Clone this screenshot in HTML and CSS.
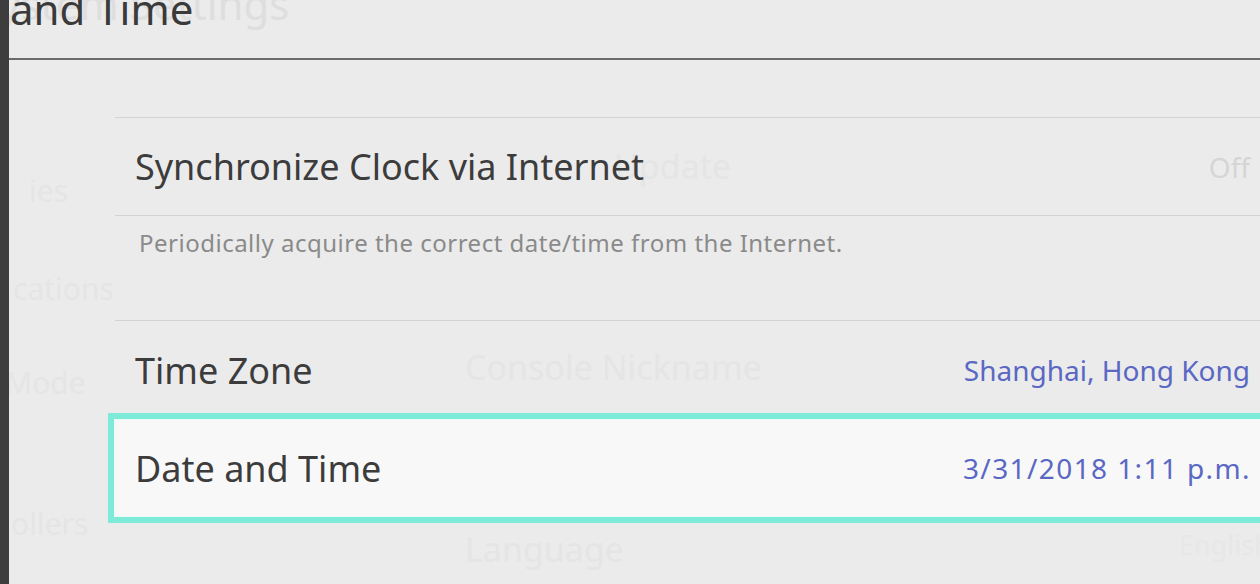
FILE: index.html
```html
<!DOCTYPE html>
<html lang="en">
<head>
    <meta charset="UTF-8">
    <meta name="viewport" content="width=device-width, initial-scale=1.0">
    <link rel="stylesheet" href="styles.css">
</head>
<body>

<div class="screen">
    <!-- Left edge of the sidebar that is sliding out -->
    <div class="strip"></div>

    <div class="main">
        <header class="title-bar">
            <h1 class="title">and Time</h1>
        </header>

        <ul class="list">
            <li class="row row-sync">
                <span class="label">Synchronize Clock via Internet</span>
                <span class="value value-off">Off</span>
            </li>
            <li class="desc">Periodically acquire the correct date/time from the Internet.</li>
            <li class="row row-zone">
                <span class="label">Time Zone</span>
                <span class="value">Shanghai, Hong Kong</span>
            </li>
            <li class="row row-selected">
                <span class="label">Date and Time</span>
                <span class="value value-date">3/31/2018 1:11 p.m.</span>
            </li>
        </ul>

        <!-- Faded text of the previous screen (cross-fade) -->
        <div class="ghosts">
            <span class="ghost ghost-title">System Settings</span>
            <span class="ghost ghost-side g-side-1">ies</span>
            <span class="ghost ghost-side g-side-2">cations</span>
            <span class="ghost ghost-side g-side-3">Mode</span>
            <span class="ghost ghost-side g-side-4">ollers</span>
            <span class="ghost ghost-item g-update">Update</span>
            <span class="ghost ghost-item g-nick">Console Nickname</span>
            <span class="ghost ghost-item g-lang">Language</span>
            <span class="ghost ghost-item g-lang-val">English</span>
        </div>
    </div>
</div>

</body>
</html>
```

FILE: styles.css
```css
body {
  margin: 0;
  padding: 0;
  width: 1260px;
  height: 584px;
  overflow: hidden;
  background-color: #ebebeb;
  font-family: "Noto Sans", "Open Sans", sans-serif;
  color: #3c3c3c;
}
.screen {
  display: flex;
  height: 584px;
}
.strip {
  width: 9px;
  flex: none;
  background-color: #3d3d3d;
}
.main {
  position: relative;
  flex: 1;
  overflow: hidden;
  background-color: #ebebeb;
}
.title-bar {
  height: 58px;
  border-bottom: 2px solid #6b6b6b;
  overflow: hidden;
}
.title {
  margin: -12px 0 0 1px;
  font-size: 42px;
  font-weight: normal;
  line-height: 42px;
  color: #3a3a3a;
  white-space: nowrap;
  position: relative;
  z-index: 1;
}
.list {
  list-style: none;
  margin: 57px -8px 0 106px;
  padding: 0;
  border-top: 1px solid #d3d3d3;
}
.row {
  display: flex;
  align-items: center;
  justify-content: space-between;
  padding: 0 18px 0 20px;
  white-space: nowrap;
}
.label {
  font-size: 36px;
  color: #3c3c3c;
}
.value {
  font-size: 28px;
  color: #5a68c4;
}
.value-date {
  letter-spacing: 1.4px;
  margin-right: -1px;
}
.value-off {
  color: #d5d5d5;
}
.row-sync {
  height: 97px;
  border-bottom: 1px solid #d3d3d3;
  position: relative;
  z-index: 1;
}
.desc {
  height: 93px;
  padding: 11px 0 0 24px;
  font-size: 24px;
  letter-spacing: 0.5px;
  line-height: 32px;
  color: #8a8a8a;
  border-bottom: 1px solid #d3d3d3;
  white-space: nowrap;
  position: relative;
  z-index: 1;
}
.row-zone {
  height: 86px;
  padding-top: 6px;
  position: relative;
  z-index: 1;
}
.row-selected {
  height: 98px;
  margin: 0 -7px;
  padding: 0 19px 0 21px;
  border: 6px solid #7eebd9;
  background-color: #f8f8f8;
  box-shadow: inset 0 0 0 1px #e9fbf8;
  position: relative;
  z-index: 2;
}

/* previous screen fading out */
.ghosts {
  position: absolute;
  top: 0;
  left: 0;
  right: 0;
  bottom: 0;
  pointer-events: none;
}
.ghost {
  position: absolute;
  white-space: nowrap;
  color: #e4e4e4;
}
.ghost-title {
  left: -33px;
  top: -17px;
  font-size: 42px;
  line-height: 42px;
  color: #dedede;
}
.ghost-side {
  font-size: 30px;
  color: #e5e5e5;
}
.g-side-1 { left: 20px; top: 170px; }
.g-side-2 { left: 4px; top: 268px; }
.g-side-3 { left: -4px; top: 362px; }
.g-side-4 { left: 2px; top: 503px; }
.ghost-item {
  font-size: 34px;
  color: #e5e5e5;
}
.g-update { left: 605px; top: 143px; }
.g-nick { left: 456px; top: 344px; }
.g-lang { left: 456px; top: 526px; }
.g-lang-val { left: 1170px; top: 526px; font-size: 27px; color: #e7e7e7; }
```
